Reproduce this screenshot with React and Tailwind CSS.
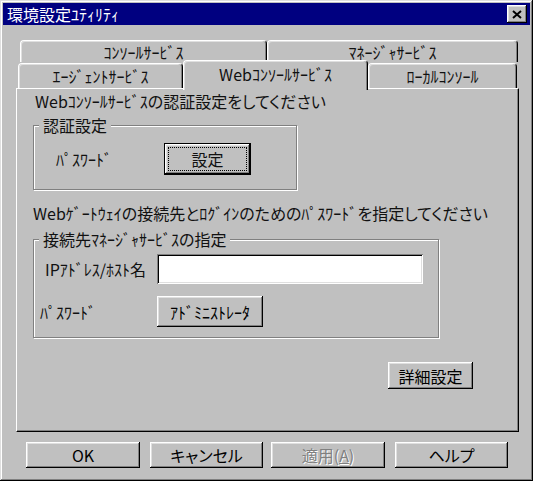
import React from "react";

const raised =
  "shadow-[inset_-1px_-1px_#000,inset_1px_1px_#fff,inset_-2px_-2px_#808080,inset_2px_2px_#dfdfdf]";
const sunken =
  "shadow-[inset_1px_1px_#808080,inset_-1px_-1px_#fff,inset_2px_2px_#000,inset_-2px_-2px_#dfdfdf]";

function Button({ children, className = "", disabled }) {
  return (
    <div className={`flex items-center justify-center bg-[#c0c0c0] ${raised} ${className}`}>
      <span className={disabled ? "text-[#808080] [text-shadow:1px_1px_0_#fff]" : "text-black"}>{children}</span>
    </div>
  );
}

function Tab({ label, className = "" }) {
  return (
    <div
      className={`flex items-center justify-center rounded-t-[4px] border-t border-l border-r border-white border-r-black bg-[#c0c0c0] shadow-[inset_-1px_0_#808080,inset_1px_1px_#dfdfdf] ${className}`}
    >
      {label}
    </div>
  );
}

function Group({ label, className = "", children }) {
  return (
    <div className={`relative border border-[#808080] shadow-[inset_1px_1px_#fff,1px_1px_#fff] ${className}`}>
      <span className="absolute -top-[9px] left-[5px] bg-[#c0c0c0] px-[4px] leading-[16px]">{label}</span>
      {children}
    </div>
  );
}

export default function App() {
  return (
    <div
      className="min-h-screen bg-white text-[16px] leading-[16px] text-[#111] [font-feature-settings:'palt']"
      style={{ fontFamily: '"Noto Sans CJK JP", "Noto Sans", sans-serif' }}
    >
      <div className="flex h-[481px] w-[533px] flex-col bg-[#c0c0c0] p-[3px] shadow-[inset_-1px_-1px_#000,inset_1px_1px_#dfdfdf,inset_-2px_-2px_#808080,inset_2px_2px_#fff]">
        {/* タイトルバー */}
        <div className="flex h-[22px] items-center justify-between bg-[#000080] pl-[4px] pr-[3px]">
          <span className="text-white">環境設定ﾕﾃｨﾘﾃｨ</span>
          <div className={`flex h-[18px] w-[20px] items-center justify-center bg-[#c0c0c0] ${raised}`}>
            <svg width="10" height="9" viewBox="0 0 10 9">
              <path d="M1 1 L9 8 M9 1 L1 8" stroke="#000" strokeWidth="2" />
            </svg>
          </div>
        </div>

        {/* タブ */}
        <div className="ml-[13px] mt-[15px] w-[503px]">
          <div className="flex h-[22px] pl-[4px]">
            <Tab label="ｺﾝｿｰﾙｻｰﾋﾞｽ" className="w-[247px]" />
            <Tab label="ﾏﾈｰｼﾞｬｻｰﾋﾞｽ" className="w-[251px]" />
          </div>
          <div className="flex h-[26px] items-end pl-[2px]">
            <Tab label="ｴｰｼﾞｪﾝﾄｻｰﾋﾞｽ" className="h-[25px] w-[165px]" />
            <Tab label="Webｺﾝｿｰﾙｻｰﾋﾞｽ" className="relative z-10 -mb-[2px] h-[30px] w-[185px] pb-[3px]" />
            <Tab label="ﾛｰｶﾙｺﾝｿｰﾙ" className="h-[25px] w-[149px]" />
          </div>

          {/* パネル */}
          <div className="flex h-[344px] flex-col border border-white border-b-black border-r-black shadow-[inset_-1px_-1px_#808080]">
            <div className="ml-[18px] mt-[4px]">Webｺﾝｿｰﾙｻｰﾋﾞｽの認証設定をしてください</div>

            <Group label="認証設定" className="ml-[16px] mt-[16px] h-[65px] w-[264px]">
              <div className="flex items-center pl-[22px] pt-[17px]">
                <span className="w-[108px]">ﾊﾟｽﾜｰﾄﾞ</span>
                <div className={`flex h-[32px] w-[87px] border border-black bg-[#c0c0c0] ${raised}`}>
                  <div className="m-[3px] flex flex-1 items-center justify-center border border-dotted border-black">設定</div>
                </div>
              </div>
            </Group>

            <div className="ml-[16px] mt-[15px]">Webｹﾞｰﾄｳｪｲの接続先とﾛｸﾞｲﾝのためのﾊﾟｽﾜｰﾄﾞを指定してください</div>

            <Group label="接続先ﾏﾈｰｼﾞｬｻｰﾋﾞｽの指定" className="ml-[16px] mt-[18px] h-[99px] w-[406px]">
              <div className="flex items-center pl-[11px] pt-[14px]">
                <span className="w-[112px]">IPｱﾄﾞﾚｽ/ﾎｽﾄ名</span>
                <div className={`h-[30px] w-[266px] bg-white ${sunken}`} />
              </div>
              <div className="mt-[12px] flex items-center pl-[6px]">
                <span className="w-[117px]">ﾊﾟｽﾜｰﾄﾞ</span>
                <Button className="h-[31px] w-[106px]">ｱﾄﾞﾐﾆｽﾄﾚｰﾀ</Button>
              </div>
            </Group>

            <Button className="ml-[371px] mt-[24px] h-[27px] w-[85px]">詳細設定</Button>
          </div>
        </div>

        {/* 下部ボタン */}
        <div className="ml-[23px] mt-[10px] flex">
          <Button className="h-[26px] w-[114px]">OK</Button>
          <Button className="ml-[10px] h-[26px] w-[113px]">キャンセル</Button>
          <Button className="ml-[8px] h-[26px] w-[114px]" disabled>
            適用(<span className="underline">A</span>)
          </Button>
          <Button className="ml-[10px] h-[26px] w-[113px]">ヘルプ</Button>
        </div>
      </div>
    </div>
  );
}
